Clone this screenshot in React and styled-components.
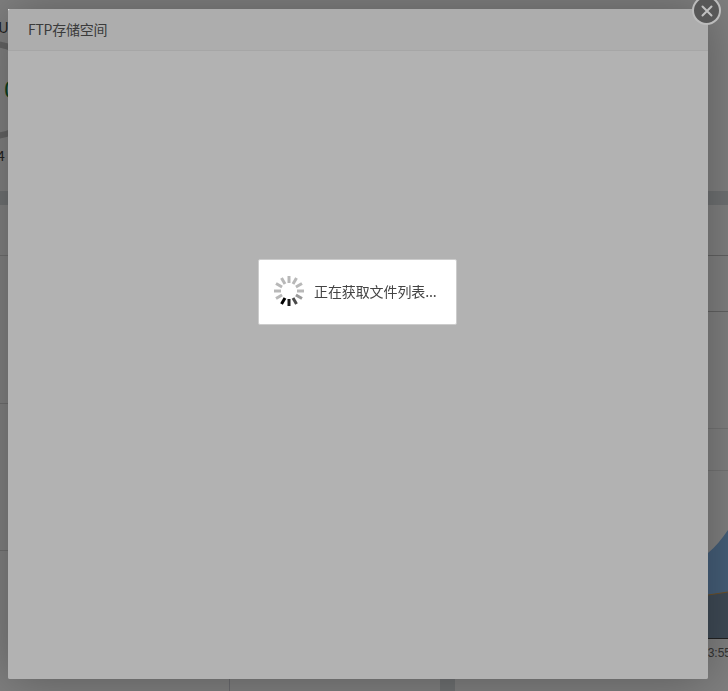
import styled, { createGlobalStyle } from "styled-components";

const GlobalStyle = createGlobalStyle`
  html, body {
    margin: 0;
    padding: 0;
    background: #dde1e4;
  }
  body {
    font-family: "Noto Sans CJK SC", "Liberation Sans", sans-serif;
    font-size: 14px;
    color: #333;
  }
`;

/* the page behind the dialog, almost everything of it is covered */
const Page = styled.div`
  width: 728px;
  height: 691px;
  overflow: hidden;
  display: flex;
  flex-direction: column;
  gap: 14px;
`;

const TopPanel = styled.section`
  height: 191px;
  flex-shrink: 0;
  background: #fff;
  overflow: hidden;
`;

const PanelTitle = styled.div`
  height: 38px;
  padding-top: 18px;
  margin-left: -2px;
  box-sizing: border-box;
  line-height: 18px;
  font-size: 15px;
  color: #444;
`;

const Gauge = styled.div`
  width: 100px;
  height: 100px;
  margin: 2px 0 0 -58px;
  display: flex;
  align-items: center;
  justify-content: center;
  position: relative;
`;

const GaugeRing = styled.svg`
  position: absolute;
  inset: 0;
`;

const GaugeValue = styled.span`
  font-family: "Liberation Sans", sans-serif;
  font-size: 24px;
  color: #17803d;
  margin-left: 38px;
`;

const GaugeNote = styled.div`
  margin: 6px 0 0 -3px;
  font-size: 14px;
  line-height: 18px;
  color: #444;
`;

const Columns = styled.div`
  flex: 1;
  display: grid;
  grid-template-columns: 440px 273px;
  column-gap: 15px;
`;

const Panel = styled.section`
  background: #fff;
  display: flex;
  flex-direction: column;
`;

const Row = styled.div`
  height: ${(p) => p.$height}px;
  flex-shrink: 0;
  box-sizing: border-box;
  border-bottom: 1px solid ${(p) => p.$line || "#dcdcdc"};
`;

const SplitRow = styled.div`
  flex: 1;
  display: grid;
  grid-template-columns: 230px 1fr;
`;

const Cell = styled.div`
  border-right: 1px solid #d4d4dc;
`;

const ChartArea = styled.svg`
  display: block;
  margin-top: auto;
`;

const AxisLabels = styled.div`
  height: 52px;
  padding: 6px 0 0 246px;
  box-sizing: border-box;
  font-family: "Liberation Sans", sans-serif;
  font-size: 12px;
  line-height: 16px;
  color: #666;
  white-space: nowrap;
`;

/* layers over the page */
const Shade = styled.div`
  position: fixed;
  inset: 0;
  background: rgba(0, 0, 0, 0.5);
`;

const Dialog = styled.div`
  position: fixed;
  left: 8px;
  top: 9px;
  width: 700px;
  height: 670px;
  background: #fff;
  border-radius: 2px;
  box-shadow: 1px 1px 50px rgba(0, 0, 0, 0.3);
  display: flex;
  flex-direction: column;
`;

const DialogHeader = styled.header`
  height: 42px;
  flex-shrink: 0;
  box-sizing: border-box;
  padding: 0 0 2px 20px;
  background: #f8f8f8;
  border-bottom: 1px solid #eee;
  line-height: 40px;
  font-size: 14px;
  letter-spacing: -0.25px;
  color: #555;
`;

const DialogBody = styled.div`
  flex: 1;
`;

const CloseButton = styled.button`
  position: absolute;
  right: -13px;
  top: -13px;
  width: 29px;
  height: 29px;
  padding: 0;
  box-sizing: border-box;
  border: 2px solid #bcbcbc;
  border-radius: 50%;
  background: #575757;
  display: flex;
  align-items: center;
  justify-content: center;
  z-index: 2;
`;

const LoadingShade = styled.div`
  position: absolute;
  inset: 0;
  border-radius: 2px;
  background: rgba(0, 0, 0, 0.3);
`;

const LoadingBox = styled.div`
  position: absolute;
  left: 250px;
  top: 250px;
  width: 199px;
  height: 66px;
  box-sizing: border-box;
  padding: 0 0 2px 14px;
  background: #fff;
  border: 1px solid #ccc;
  border-radius: 2px;
  display: flex;
  align-items: center;
  gap: 9px;
  font-size: 14px;
  letter-spacing: -0.1px;
  color: #444;
  white-space: nowrap;
`;

const spokes = [
  "#b8b8b8", "#b8b8b8", "#b8b8b8", "#b8b8b8", "#9a9a9a", "#4a4a4a",
  "#1c1c1c", "#000000", "#b8b8b8", "#b8b8b8", "#b8b8b8", "#b8b8b8",
];

const Spinner = () => (
  <svg width="32" height="32" viewBox="0 0 32 32">
    {spokes.map((color, i) => (
      <line
        key={i}
        x1="16"
        y1="1"
        x2="16"
        y2="8"
        stroke={color}
        strokeWidth="3"
        transform={`rotate(${i * 30} 16 16)`}
      />
    ))}
  </svg>
);

const App = () => {
  return (
    <>
      <GlobalStyle />
      <Page>
        <TopPanel>
          <PanelTitle>U</PanelTitle>
          <Gauge>
            <GaugeRing width="100" height="100" viewBox="0 0 100 100">
              <circle cx="50" cy="50" r="46" fill="none" stroke="#c8c8c8" strokeWidth="6" />
            </GaugeRing>
            <GaugeValue>0</GaugeValue>
          </Gauge>
          <GaugeNote>4</GaugeNote>
        </TopPanel>
        <Columns>
          <Panel>
            <Row $height={51} />
            <Row $height={148} />
            <Row $height={147} />
            <SplitRow>
              <Cell />
              <div />
            </SplitRow>
          </Panel>
          <Panel>
            <Row $height={51} $line="#c4c4c4" />
            <Row $height={56} $line="#c4c4c4" />
            <Row $height={117} $line="#e6e6e6" />
            <Row $height={42} $line="#e6e6e6" />
            <ChartArea width="273" height="167" viewBox="0 0 273 167">
              <path
                d="M0 158 C120 158 210 130 253 81 C260 75 267 67 273 58 L273 167 L0 167 Z"
                fill="#8abcf0"
              />
              <path d="M0 150 C100 140 190 128 253 123 L273 120 L273 167 L0 167 Z" fill="#7d94ab" />
              <path d="M0 150 C100 140 190 128 253 123 L273 120" fill="none" stroke="#d9a050" strokeWidth="1" />
              <line x1="0" y1="166.5" x2="273" y2="166.5" stroke="#444" strokeWidth="1" />
            </ChartArea>
            <AxisLabels>13:55</AxisLabels>
          </Panel>
        </Columns>
      </Page>
      <Shade />
      <Dialog>
        <DialogHeader>FTP存储空间</DialogHeader>
        <DialogBody />
        <LoadingShade />
        <LoadingBox>
          <Spinner />
          正在获取文件列表...
        </LoadingBox>
        <CloseButton aria-label="关闭">
          <svg width="14" height="14" viewBox="0 0 14 14">
            <path d="M2.5 2.5 L11.5 11.5 M11.5 2.5 L2.5 11.5" stroke="#c0c0c0" strokeWidth="2" strokeLinecap="round" />
          </svg>
        </CloseButton>
      </Dialog>
    </>
  );
};

export default App;
